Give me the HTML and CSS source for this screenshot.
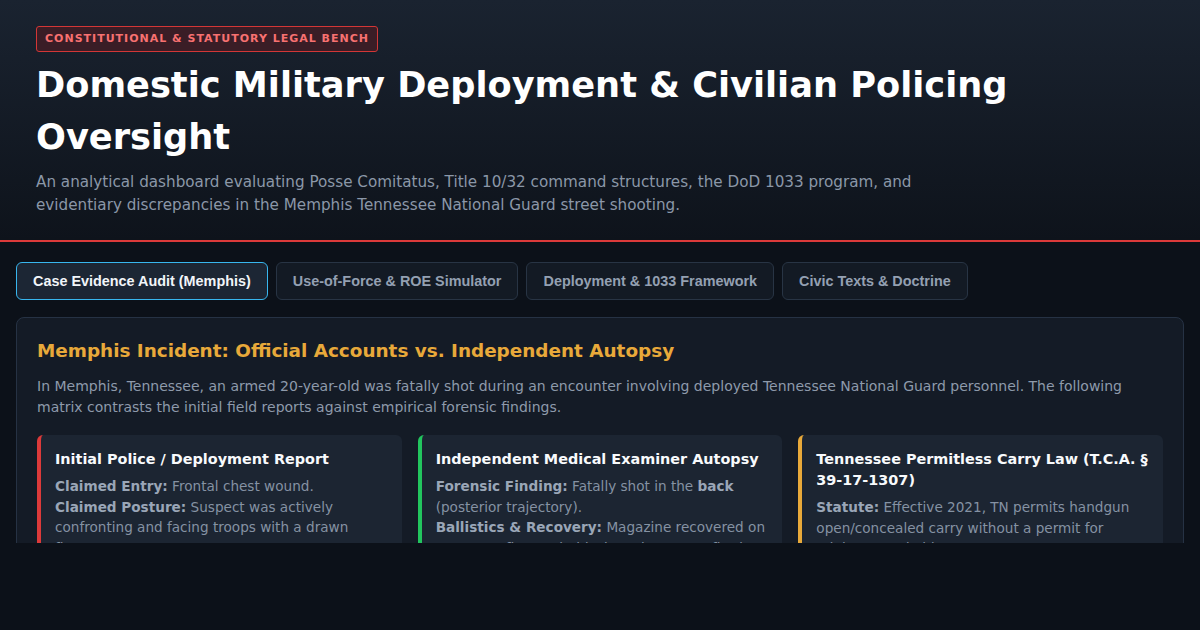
FILE: index.html
```html
<!DOCTYPE html>
<html lang="en">
<head>
<meta charset="utf-8">
<title>Domestic Military Deployment &amp; Civilian Policing Oversight</title>
<link rel="stylesheet" href="styles.css">
</head>
<body>
<div class="app">
  <header class="hero">
    <span class="badge">CONSTITUTIONAL &amp; STATUTORY LEGAL BENCH</span>
    <h1 class="title">Domestic Military Deployment &amp; Civilian Policing Oversight</h1>
    <p class="subtitle">An analytical dashboard evaluating Posse Comitatus, Title 10/32 command structures, the DoD 1033 program, and evidentiary discrepancies in the Memphis Tennessee National Guard street shooting.</p>
  </header>
  <main class="main">
    <nav class="tabs">
      <button class="tab active">Case Evidence Audit (Memphis)</button>
      <button class="tab">Use-of-Force &amp; ROE Simulator</button>
      <button class="tab">Deployment &amp; 1033 Framework</button>
      <button class="tab">Civic Texts &amp; Doctrine</button>
    </nav>
    <section class="panel">
      <h2 class="panel-title">Memphis Incident: Official Accounts vs. Independent Autopsy</h2>
      <p class="panel-text">In Memphis, Tennessee, an armed 20-year-old was fatally shot during an encounter involving deployed Tennessee National Guard personnel. The following matrix contrasts the initial field reports against empirical forensic findings.</p>
      <div class="cards">
        <article class="card card-red">
          <h3 class="card-title">Initial Police / Deployment Report</h3>
          <p class="card-line"><b>Claimed Entry:</b> Frontal chest wound.</p>
          <p class="card-line"><b>Claimed Posture:</b> Suspect was actively confronting and facing troops with a drawn firearm.</p>
        </article>
        <article class="card card-green">
          <h3 class="card-title">Independent Medical Examiner Autopsy</h3>
          <p class="card-line"><b>Forensic Finding:</b> Fatally shot in the <b>back</b> (posterior trajectory).</p>
          <p class="card-line"><b>Ballistics &amp; Recovery:</b> Magazine recovered on scene; no firearm held when shots were fired.</p>
        </article>
        <article class="card card-amber">
          <h3 class="card-title">Tennessee Permitless Carry Law (T.C.A. § 39-17-1307)</h3>
          <p class="card-line"><b>Statute:</b> Effective 2021, TN permits handgun open/concealed carry without a permit for adults 21 and older.</p>
        </article>
      </div>
    </section>
  </main>
</div>
</body>
</html>
```

FILE: styles.css
```css
* { box-sizing: border-box; }
html, body { margin: 0; padding: 0; background: #0c1119; }
body { font-family: "DejaVu Sans", sans-serif; color: #e2e8f0; }
.app { height: 543px; overflow: hidden; }

.hero {
  background: linear-gradient(180deg, #1a2330 0%, #0e131b 100%);
  border-bottom: 2px solid #dc3a3a;
  padding: 26px 36px 23px;
}
.badge {
  display: inline-block;
  font-size: 11px;
  font-weight: bold;
  letter-spacing: 1px;
  color: #f87171;
  background: #3a1d26;
  border: 1px solid #d33636;
  border-radius: 3px;
  padding: 4px 8px 5px;
  line-height: 15px;
}
.title {
  margin: 7px 0 0;
  font-size: 35.2px;
  line-height: 52px;
  font-weight: bold;
  color: #ffffff;
  max-width: 1100px;
}
.subtitle {
  margin: 8px 0 0;
  font-size: 15.2px;
  line-height: 23px;
  color: #8b97a8;
  max-width: 900px;
}

.main { padding: 20px 16px 0; }
.tabs { display: flex; gap: 8px; }
.tab {
  font-family: "Liberation Sans", Arial, sans-serif;
  font-size: 14.4px;
  font-weight: bold;
  color: #94a0b2;
  background: #131a24;
  border: 1px solid #283444;
  border-radius: 6px;
  padding: 0 16px;
  height: 38px;
}
.tab.active {
  color: #f1f5f9;
  background: #1c2634;
  border-color: #38b6ee;
}

.panel {
  margin-top: 17px;
  background: #141b26;
  border: 1px solid #263244;
  border-radius: 8px;
  padding: 20px 20px 24px;
}
.panel-title {
  margin: 0;
  font-size: 18.4px;
  line-height: 26px;
  font-weight: bold;
  color: #e8a93a;
}
.panel-text {
  margin: 12px 0 0;
  font-size: 14px;
  line-height: 21px;
  color: #8e9aab;
}
.cards {
  margin-top: 17px;
  display: grid;
  grid-template-columns: repeat(3, 1fr);
  gap: 16px;
}
.card {
  background: #1c2532;
  border-radius: 6px;
  border-left: 4px solid #dc3a3a;
  padding: 14px 14px 16px;
}
.card-green { border-left-color: #22c55e; }
.card-amber { border-left-color: #e8a93a; }
.card-title {
  margin: 0 0 6px;
  font-size: 14.4px;
  line-height: 21px;
  font-weight: bold;
  color: #f8fafc;
}
.card-line {
  margin: 0;
  font-size: 13.6px;
  line-height: 20.5px;
  color: #8592a3;
}
.card-line b { color: #9aa6b7; }
```
